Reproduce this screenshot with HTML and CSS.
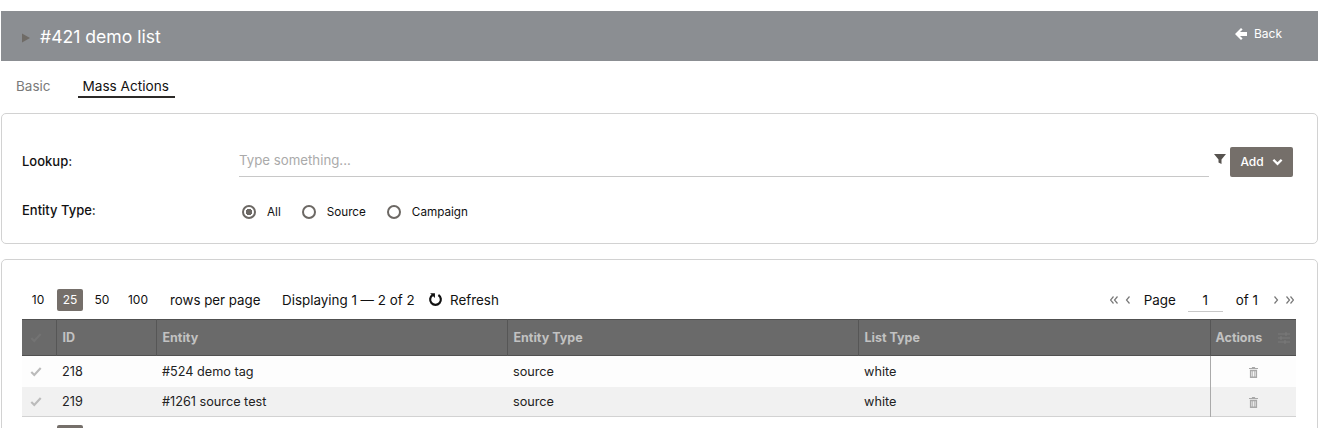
FILE: index.html
```html
<!DOCTYPE html>
<html lang="en">
<head>
<meta charset="utf-8">
<title>#421 demo list</title>
<link rel="stylesheet" href="styles.css">
</head>
<body>
<div class="page">
  <header class="titlebar">
    <div class="title"><svg class="caret" viewBox="0 0 10 10"><path d="M1 .5l8 4.500-8 4.500z"/></svg><h1>#421 demo list</h1></div>
    <a class="back"><svg viewBox="0 0 14 14"><path d="M7 1L1 7l6 6 1.600-1.600L6 9h7V5H6l2.600-2.400z"/></svg>Back</a>
  </header>
  <nav class="tabs"><a class="tab">Basic</a><a class="tab active">Mass Actions</a></nav>
  <section class="card filters">
    <div class="row lookup">
      <label class="label">Lookup:</label>
      <div class="input">Type something...</div>
      <svg class="funnel" viewBox="0 0 12 12"><path d="M0 1h12L7.500 6.500V11l-3-1.500v-3z"/></svg>
      <button class="add">Add<svg viewBox="0 0 12 8"><path d="M1.500 1.500L6 6l4.500-4.500" /></svg></button>
    </div>
    <div class="row types">
      <label class="label">Entity Type:</label>
      <div class="radios">
        <span class="radio on"><i></i>All</span>
        <span class="radio"><i></i>Source</span>
        <span class="radio"><i></i>Campaign</span>
      </div>
    </div>
  </section>
  <section class="card results">
    <div class="toolbar">
      <div class="sizes"><span>10</span><span class="cur">25</span><span>50</span><span>100</span></div>
      <span class="rpp">rows per page</span>
      <span class="disp">Displaying 1 — 2 of 2</span>
      <span class="refresh"><svg viewBox="0 0 14 14"><path d="M4.300 2.800A5 5 0 1 0 9.700 2.800"/><path class="fill" d="M2 1.200h4.500v4.300z"/></svg>Refresh</span>
      <div class="pager">
        <svg class="nav" viewBox="0 0 8 8"><path d="M3.500 .5L.5 4l3 3.500M7.500 .5L4.500 4l3 3.500"/></svg>
        <svg class="nav" viewBox="0 0 8 8"><path d="M5.500 .5L2.500 4l3 3.500"/></svg>
        <span class="pg">Page</span><span class="pgnum">1</span><span class="of">of 1</span>
        <svg class="nav" viewBox="0 0 8 8"><path d="M2.500 .5L5.500 4l-3 3.500"/></svg>
        <svg class="nav" viewBox="0 0 8 8"><path d="M.5 .5L3.500 4l-3 3.500M4.500 .5L7.500 4l-3 3.500"/></svg>
      </div>
    </div>
    <table>
      <colgroup><col class="c0"><col class="c1"><col class="c2"><col class="c3"><col class="c4"><col class="c5"></colgroup>
      <thead><tr>
        <th><svg class="chk dark" viewBox="0 0 14 12"><path d="M1.500 6.500l3.500 3.500 7.500-8"/></svg></th>
        <th>ID</th><th>Entity</th><th>Entity Type</th><th>List Type</th>
        <th class="act">Actions<svg class="sliders" viewBox="0 0 12 12"><path d="M0 2h12M0 6h12M0 10h12M8 0v4M3 4v4M7 8v4"/></svg></th>
      </tr></thead>
      <tbody>
        <tr class="first"><td><svg class="chk" viewBox="0 0 14 12"><path d="M1.500 6.500l3.500 3.500 7.500-8"/></svg></td><td>218</td><td>#524 demo tag</td><td>source</td><td>white</td>
          <td class="del"><svg viewBox="0 0 10 12"><path d="M3.500 0h3l.5 1h3v1.200H0V1h3zM1 3h8v9H1zM2.700 4.500v6h1v-6zm1.800 0v6h1v-6zm1.800 0v6h1v-6z" fill-rule="evenodd"/></svg></td></tr>
        <tr class="alt"><td><svg class="chk" viewBox="0 0 14 12"><path d="M1.500 6.500l3.500 3.500 7.500-8"/></svg></td><td>219</td><td>#1261 source test</td><td>source</td><td>white</td>
          <td class="del"><svg viewBox="0 0 10 12"><path d="M3.500 0h3l.5 1h3v1.200H0V1h3zM1 3h8v9H1zM2.700 4.500v6h1v-6zm1.800 0v6h1v-6zm1.800 0v6h1v-6z" fill-rule="evenodd"/></svg></td></tr>
      </tbody>
    </table>
    <div class="footer-current"></div>
  </section>
</div>
</body>
</html>
```
FILE: styles.css
```css
* { box-sizing: border-box; }
html, body { margin: 0; height: 428px; overflow: hidden; background: #fff; }
body { font-family: Inter, "Liberation Sans", sans-serif; font-size: 13px; color: #111; }
.page { width: 1317px; height: 428px; overflow: hidden; margin-left: 1px; padding-top: 11px; }

.titlebar { height: 50px; background: #8b8e92; display: flex; align-items: center; justify-content: space-between; color: #fff; }
.title { display: flex; align-items: center; padding-left: 20px; }
.caret { width: 10px; height: 10px; fill: #6f6b66; margin-right: 9px; margin-top: 3px; }
h1 { margin: 0; font-size: 17.600px; font-weight: 400; }
.back { display: flex; align-items: center; font-size: 12px; margin-right: 36px; margin-top: -5px; }
.back svg { width: 14px; height: 14px; fill: #fff; margin-right: 6px; }

.tabs { display: flex; height: 52px; padding: 15px 0 0 15px; }
.tab { font-size: 13.500px; color: #7a7a7a; height: 22px; line-height: 20px; }
.tab.active { font-size: 13.600px; color: #111; margin-left: 27px; padding: 0 5px; border-bottom: 2px solid #2c2a28; width: 97px; white-space: nowrap; }

.card { border: 1px solid #d2d2d2; border-radius: 5px; background: #fff; }
.filters { height: 131px; padding: 32px 23px 0 20px; margin-bottom: 15px; }
.row { display: flex; align-items: center; }
.label { width: 217px; font-size: 13px; font-weight: 500; color: #111; }
.lookup { height: 31px; }
.lookup .label { margin-top: -2px; }
.input { width: 970px; height: 31px; border-bottom: 1px solid #c8c8c8; color: #aaa; font-size: 13.250px; line-height: 28px; }
.funnel { width: 12px; height: 12px; fill: #57534f; margin: -6px 4px 0 5px; }
.add { width: 63px; height: 30px; background: #756f6a; border: 0; border-radius: 2px; color: #fff; font: 500 12px Inter, sans-serif; display: flex; align-items: center; justify-content: center; gap: 8px; }
.add svg { width: 11px; height: 8px; fill: none; stroke: #fff; stroke-width: 2.500; }
.types { margin-top: 19px; height: 30px; }
.types .label { margin-top: -2px; }
.radios { display: flex; padding: 2px 0 0 3px; font-size: 11.700px; }
.radio { display: flex; align-items: center; margin-right: 21px; }
.radio i { width: 14px; height: 14px; border: 2px solid #6c6864; border-radius: 50%; margin-right: 11px; background: #fff; }
.radio.on i { background: radial-gradient(circle, #6c6864 0 3px, #fff 3.500px); }

.results { height: 200px; padding: 0 20px; }
.toolbar { height: 59px; padding-top: 20px; display: flex; align-items: center; font-size: 13.400px; }
.sizes { display: flex; font-size: 12px; width: 137px; padding-left: 3px; }
.sizes span { width: 26px; height: 22px; margin-right: 6px; line-height: 22px; text-align: center; border-radius: 2px; }
.sizes span:nth-child(3) { margin-right: 8px; }
.sizes span:last-child { width: 30px; margin: 0; }
.sizes .cur { background: #756f6a; color: #fff; }
.rpp { margin-left: 11px; width: 112px; font-size: 13.300px; }
.disp { width: 146px; }
.refresh { display: flex; align-items: center; }
.refresh svg { width: 15px; height: 15px; margin-right: 7px; fill: none; stroke: #111; stroke-width: 2; }
.refresh .fill { fill: #111; stroke: none; }
.pager { margin-left: auto; display: flex; align-items: center; color: #111; padding-right: 3px; }
.nav { width: 8px; height: 8px; fill: none; stroke: #777; stroke-width: 1.200; margin-right: 6px; }
.nav:last-child { margin-right: 0; }
.pg { margin-left: 6px; }
.pgnum { width: 35px; height: 24px; line-height: 24px; margin: 0 13px 0 12px; text-align: center; border-bottom: 1px solid #c8c8c8; }
.of { margin-right: 14px; }

table { width: 1274px; border-collapse: collapse; table-layout: fixed; font-size: 12.700px; }
.c0 { width: 34px; } .c1 { width: 100px; } .c2 { width: 351px; } .c3 { width: 351px; } .c4 { width: 352px; } .c5 { width: 86px; }
thead tr { height: 36px; background: #6a6a6a; border-top: 1px solid #505050; border-bottom: 1px solid #505050; }
th { text-align: left; color: #c2c2c2; font-size: 12.500px; font-weight: 700; padding: 0 0 0 6px; border-left: 1px solid #565656; }
th:first-child { border-left: 0; padding-left: 5px; }
th.act { position: relative; padding-left: 5px; }
tbody tr { height: 30px; background: #fdfdfd; }
tbody tr.first { height: 31px; }
tr.alt { background: #f1f1f1; border-bottom: 1px solid #d2d2d2; }
td { padding: 0 0 0 6px; color: #222; }
td:first-child { padding-left: 5px; }
.chk { display: block; width: 12px; height: 11px; margin-left: 3px; fill: none; stroke: #bbb; stroke-width: 2.500; }
.chk.dark { stroke: #737373; }
.sliders { position: absolute; right: 6px; top: 12px; width: 12px; height: 12px; fill: none; stroke: #7a7a7a; stroke-width: 1; }
td.del { border-left: 1px solid #aaa; text-align: center; padding: 0; }
.del svg { display: inline-block; vertical-align: middle; width: 9px; height: 11px; fill: #a8a8a8; }
.footer-current { width: 26px; height: 22px; margin: 8px 0 0 35px; background: #756f6a; border-radius: 2px; }
```
